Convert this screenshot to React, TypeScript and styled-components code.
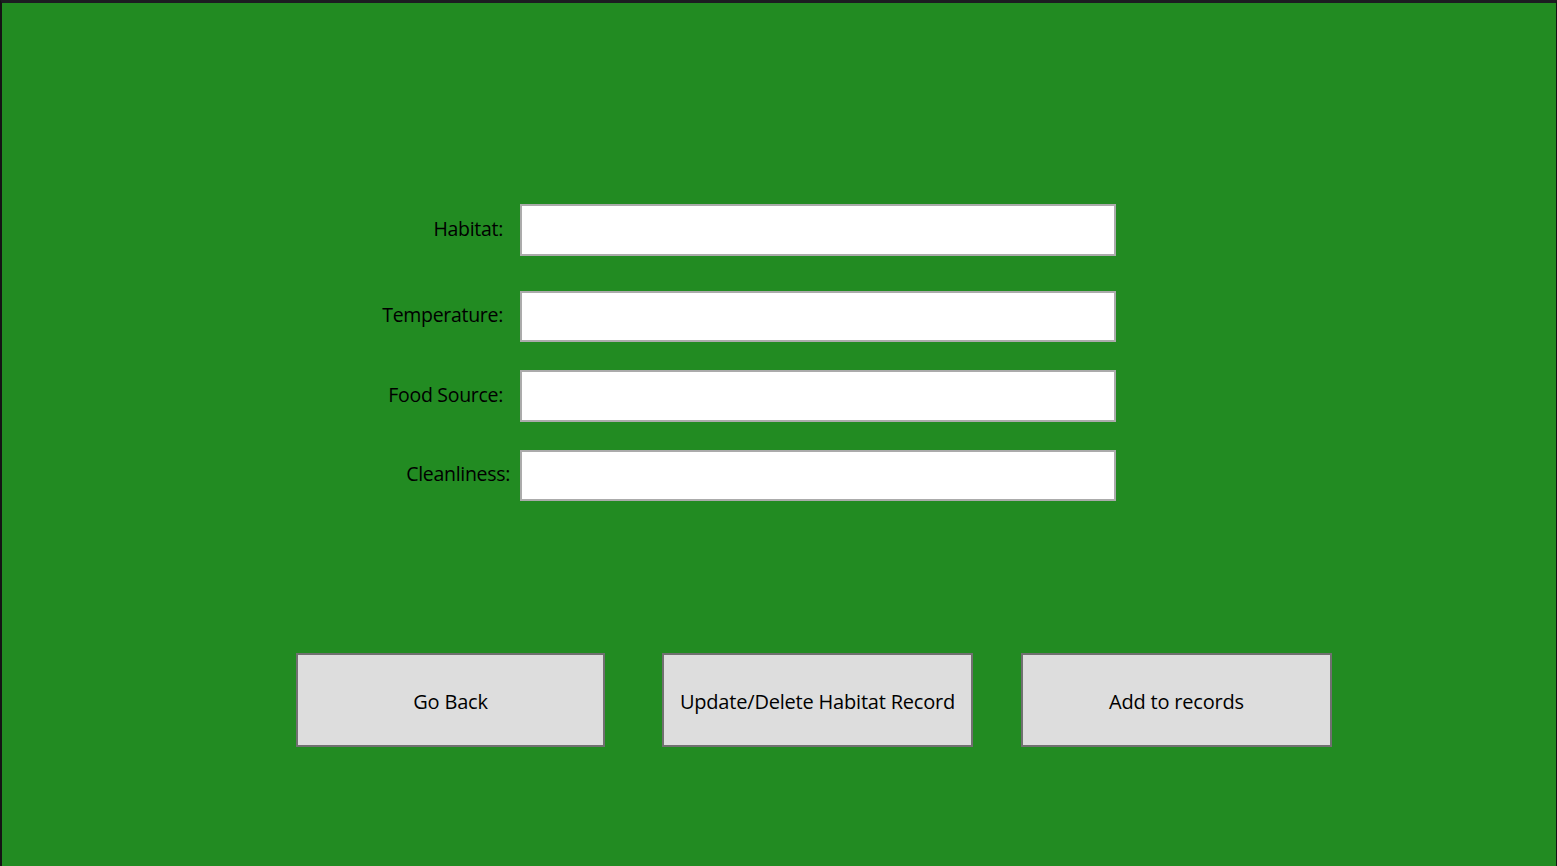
import React from "react";
import styled, { createGlobalStyle } from "styled-components";

const Global = createGlobalStyle`
  html, body { margin: 0; padding: 0; background: #1b1b1b; }
  body { font-family: "Open Sans", "Noto Sans", sans-serif; }
  * { box-sizing: border-box; }
`;

const Window = styled.div`
  width: 1557px;
  height: 866px;
  background: #228b22;
  border-top: 3px solid #1c1d21;
  border-left: 2px solid #141414;
  border-right: 1px solid #141414;
  display: flex;
  flex-direction: column;
  overflow: hidden;
`;

const Form = styled.div`
  display: flex;
  flex-direction: column;
  margin: 201px 0 0 368px;
`;

const Row = styled.div<{ $top: number }>`
  display: flex;
  align-items: center;
  margin-top: ${(p) => p.$top}px;
`;

const LabelCell = styled.div`
  width: 150px;
  display: flex;
  justify-content: flex-end;
`;

const Label = styled.label<{ $right: number }>`
  font-size: 19.5px;
  color: #000;
  padding-right: ${(p) => p.$right}px;
  margin-top: -4px;
  letter-spacing: -0.3px;
`;

const Input = styled.input<{ $h: number }>`
  width: 596px;
  height: ${(p) => p.$h}px;
  border: 2px solid #ababab;
  background: #fff;
  outline: none;
  padding: 0 6px;
  font-family: inherit;
  font-size: 18px;
`;

const Buttons = styled.div`
  display: flex;
  margin: 152px 0 0 294px;
`;

const Button = styled.button<{ $w: number; $gap: number }>`
  width: ${(p) => p.$w}px;
  height: 94px;
  margin-left: ${(p) => p.$gap}px;
  background: #dddddd;
  border: 2px solid #707070;
  font-family: "Open Sans", "Noto Sans", sans-serif;
  font-size: 20px;
  letter-spacing: -0.2px;
  color: #000;
  padding: 2px 0 0 0;
  cursor: pointer;
`;

const fields = [
  { label: "Habitat:", top: 0, right: 17, h: 52 },
  { label: "Temperature:", top: 35, right: 17, h: 51 },
  { label: "Food Source:", top: 28, right: 17, h: 52 },
  { label: "Cleanliness:", top: 28, right: 10, h: 51 },
];

export default function App() {
  return (
    <>
      <Global />
      <Window>
        <Form>
          {fields.map((f) => (
            <Row key={f.label} $top={f.top}>
              <LabelCell>
                <Label $right={f.right}>{f.label}</Label>
              </LabelCell>
              <Input $h={f.h} />
            </Row>
          ))}
        </Form>
        <Buttons>
          <Button $w={309} $gap={0}>Go Back</Button>
          <Button $w={311} $gap={57}>Update/Delete Habitat Record</Button>
          <Button $w={311} $gap={48}>Add to records</Button>
        </Buttons>
      </Window>
    </>
  );
}
